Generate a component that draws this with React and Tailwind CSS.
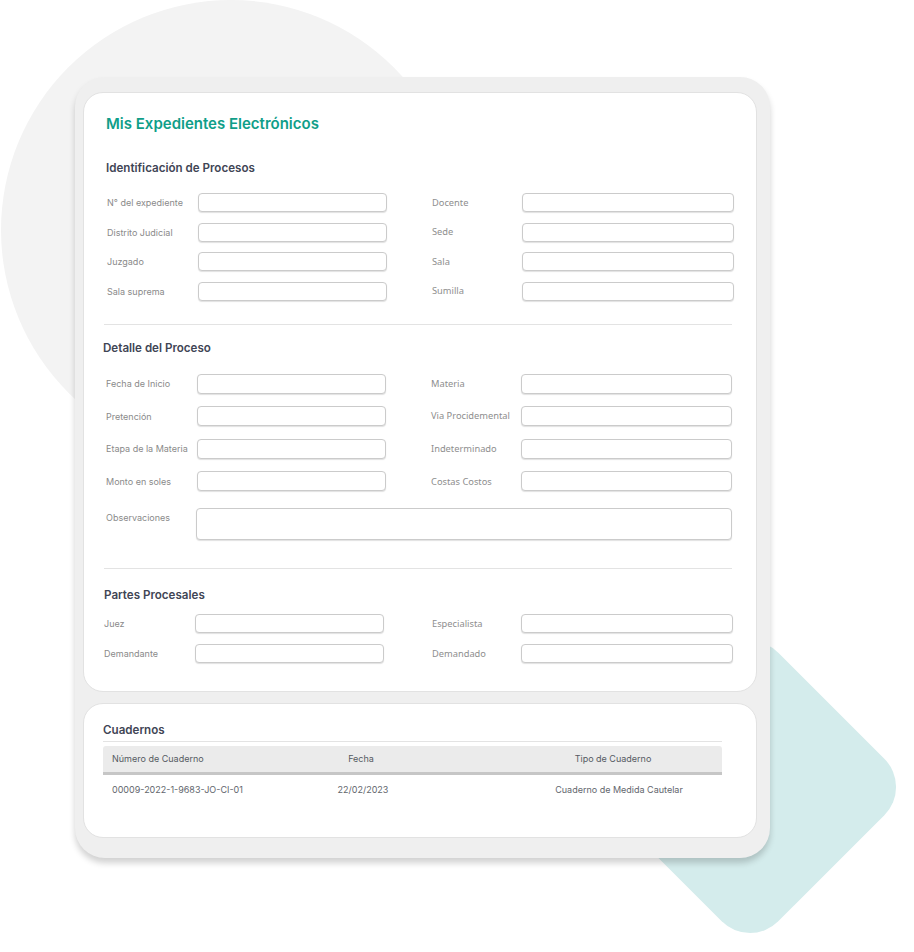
import React from "react";

const inter = "font-['Inter','Liberation_Sans',sans-serif]";
const noto = "font-['Noto_Sans','Open_Sans',sans-serif]";

const Input = ({className}) => (
    <div className={`bg-white border border-[#cbcbcb] rounded-[4px] shadow-[0_1px_1px_rgba(0,0,0,0.12)] ${className}`}/>
);

const Field = ({label, labelW, inputW, h, right}) => (
    <div className="flex items-center">
        <div className={`${labelW} shrink-0 leading-none ${right ? `${noto} text-[9.3px] text-[#8e8e8e]` : `${inter} text-[9px] text-[#8a8a8a]`}`}>
            {label}
        </div>
        <Input className={`${inputW} ${h}`}/>
    </div>
);

const Heading = ({children, className}) => (
    <h2 className={`text-[11.6px] leading-[14px] font-semibold text-[#3f4555] ${className}`}>{children}</h2>
);

const Divider = ({className}) => <div className={`h-px bg-[#e3e3e3] ${className}`}/>;

const identificacion = [
    ["N° del expediente", "Docente"],
    ["Distrito Judicial", "Sede"],
    ["Juzgado", "Sala"],
    ["Sala suprema", "Sumilla"],
];

const detalle = [
    ["Fecha de Inicio", "Materia"],
    ["Pretención", "Via Procidemental"],
    ["Etapa de la Materia", "Indeterminado"],
    ["Monto en soles", "Costas Costos"],
];

const partes = [
    ["Juez", "Especialista"],
    ["Demandante", "Demandado"],
];

export default function App() {
    return (
        <div className={`relative w-[914px] h-[952px] overflow-hidden bg-white ${inter}`}>
            {/* background shapes */}
            <div className="absolute left-[1px] top-0 w-[460px] h-[460px] rounded-full bg-[#f3f3f3]"/>
            <div className="absolute left-[635px] top-[672px] w-[230px] h-[230px] rounded-[40px] bg-[#d4ecec] rotate-45"/>

            <div className="relative z-10 ml-[75px] pt-[77px]">
                <div className="w-[695px] rounded-[30px] bg-[#efefef] pl-[8px] pr-[13px] pt-[15px] pb-[20px] shadow-[0_5px_6px_rgba(0,0,0,0.18)] flex flex-col gap-[11px]">
                    {/* main form card */}
                    <div className="relative h-[600px] bg-white rounded-[20px] border border-[#e2e2e2] flex flex-col">
                        <h1 className="ml-[22px] mt-[22px] text-[15px] leading-[18px] font-semibold text-[#0f9e89]">
                            Mis Expedientes Electrónicos
                        </h1>

                        <Heading className="ml-[22px] mt-[28px]">Identificación de Procesos</Heading>
                        <div className="ml-[23px] mt-[18px] flex flex-col gap-[10.5px]">
                            {identificacion.map(([l, r]) => (
                                <div key={l} className="flex">
                                    <Field label={l} labelW="w-[91px]" inputW="w-[189px]" h="h-[19px]"/>
                                    <div className="ml-[45px]">
                                        <Field label={r} labelW="w-[90px]" inputW="w-[212px]" h="h-[19px]" right/>
                                    </div>
                                </div>
                            ))}
                        </div>

                        <Divider className="ml-[20px] w-[628px] mt-[23px]"/>

                        <Heading className="ml-[19px] mt-[16px]">Detalle del Proceso</Heading>
                        <div className="ml-[22px] mt-[19px] flex flex-col gap-[12.6px]">
                            {detalle.map(([l, r]) => (
                                <div key={l} className="flex">
                                    <Field label={l} labelW="w-[91px]" inputW="w-[189px]" h="h-[20px]"/>
                                    <div className="ml-[45px]">
                                        <Field label={r} labelW="w-[90px]" inputW="w-[211px]" h="h-[20px]" right/>
                                    </div>
                                </div>
                            ))}
                        </div>
                        <div className="ml-[22px] mt-[17px] flex items-start">
                            <div className="w-[90px] pt-[5px] text-[9px] leading-none text-[#8a8a8a]">Observaciones</div>
                            <Input className="w-[536px] h-[32px]"/>
                        </div>

                        <Divider className="ml-[20px] w-[628px] mt-[28px]"/>

                        <Heading className="ml-[20px] mt-[19px]">Partes Procesales</Heading>
                        <div className="ml-[20px] mt-[12px] flex flex-col gap-[11px]">
                            {partes.map(([l, r]) => (
                                <div key={l} className="flex">
                                    <Field label={l} labelW="w-[91px]" inputW="w-[189px]" h="h-[19px]"/>
                                    <div className="ml-[48px]">
                                        <Field label={r} labelW="w-[89px]" inputW="w-[212px]" h="h-[19px]" right/>
                                    </div>
                                </div>
                            ))}
                        </div>
                    </div>

                    {/* cuadernos card */}
                    <div className="h-[135px] bg-white rounded-[20px] border border-[#e2e2e2] pl-[19px] pt-[19px]">
                        <Heading>Cuadernos</Heading>
                        <div className="w-[619px] mt-[4px] border-t border-[#e3e3e3] pt-[4px]">
                            <div className="h-[29px] bg-[#ebebeb] border-b-[3px] border-[#c6c6c6] rounded-t-[3px] flex items-center text-[9px] text-[#555a62]">
                                <div className="w-[197px] pl-[9px]">Número de Cuaderno</div>
                                <div className="w-[122px] text-center">Fecha</div>
                                <div className="flex-1"/>
                                <div className="w-[212px] text-center pr-[6px]">Tipo de Cuaderno</div>
                            </div>
                            <div className="h-[29px] flex items-center text-[9px] text-[#62666d]">
                                <div className="w-[197px] pl-[9px]">00009-2022-1-9683-JO-CI-01</div>
                                <div className="w-[122px] text-center pl-[4px]">22/02/2023</div>
                                <div className="flex-1"/>
                                <div className="w-[212px] text-center pl-[6px]">Cuaderno de Medida Cautelar</div>
                            </div>
                        </div>
                    </div>
                </div>
            </div>
        </div>
    );
}
